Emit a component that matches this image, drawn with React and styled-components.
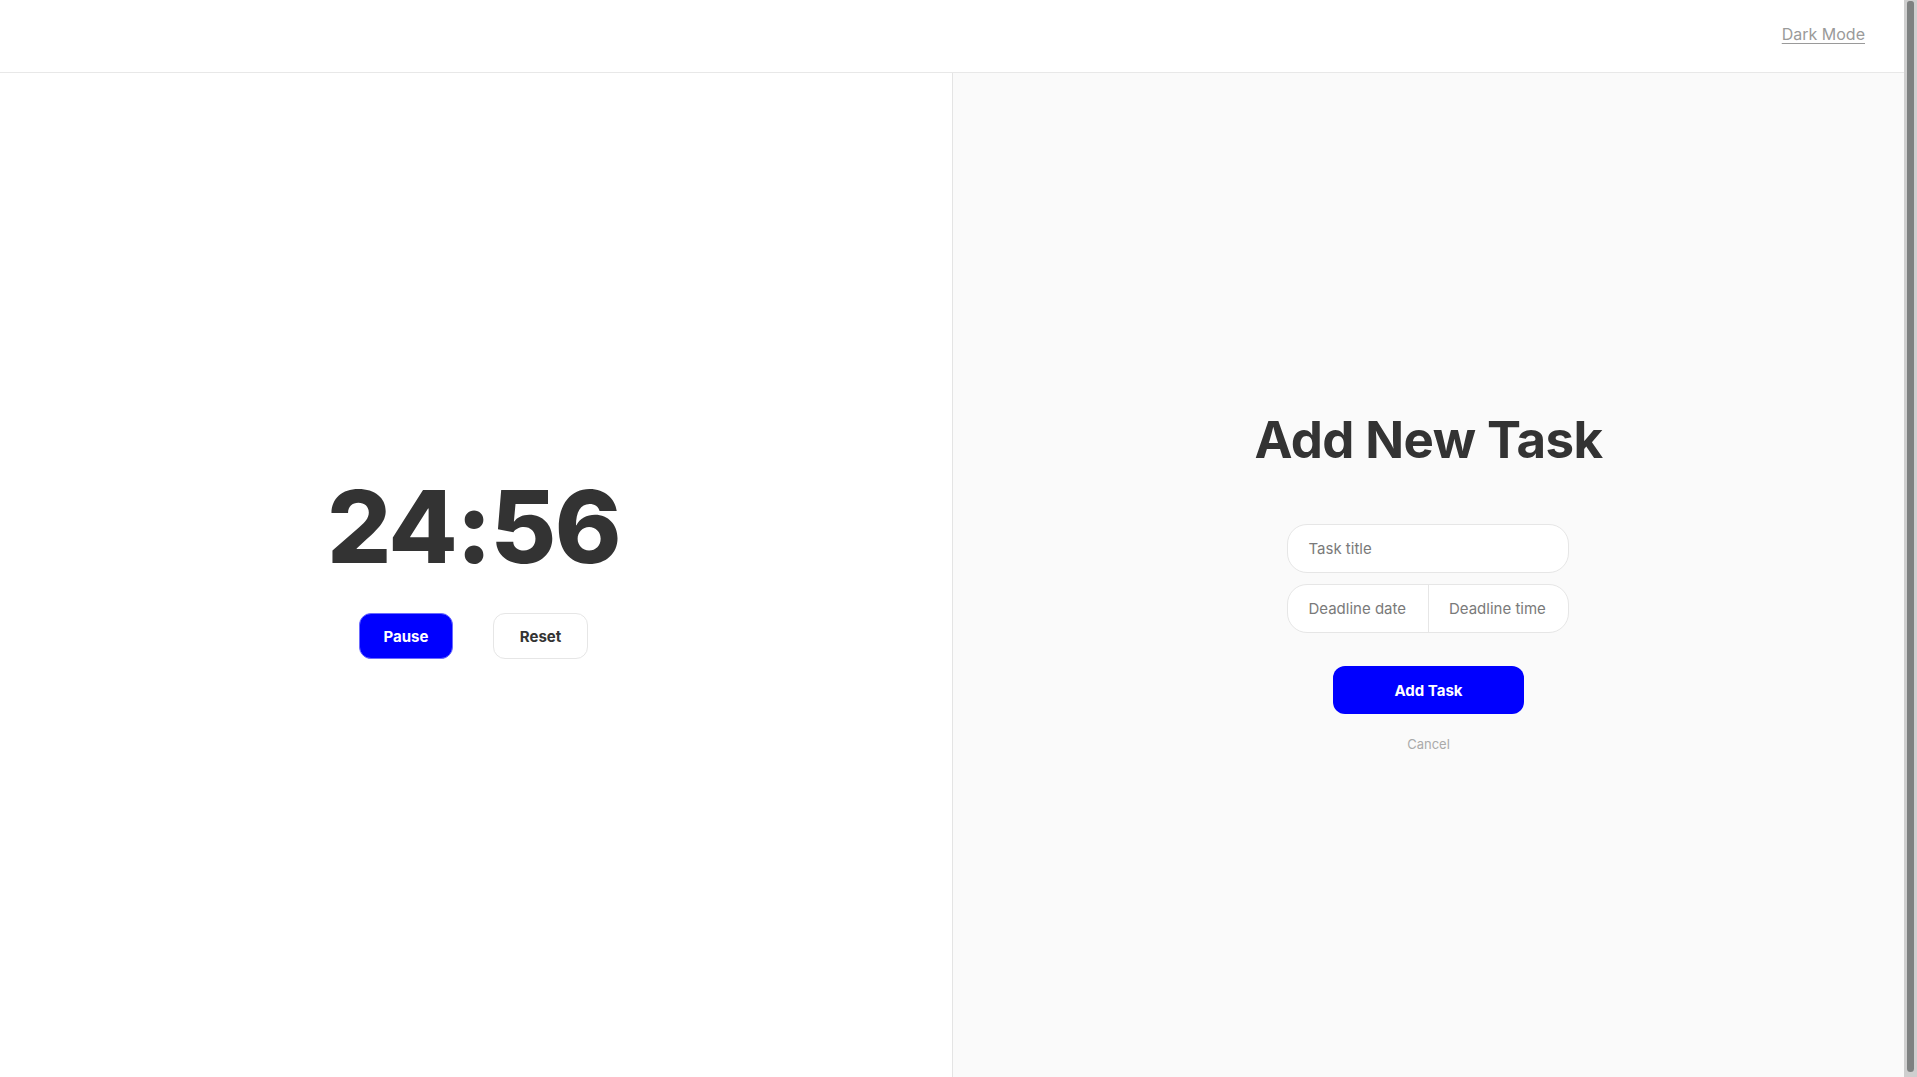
import styled, { createGlobalStyle } from "styled-components";

const GlobalStyle = createGlobalStyle`
  html, body {
    margin: 0;
    padding: 0;
    background: #ffffff;
    font-family: Inter, "Noto Sans", sans-serif;
    color: #333333;
  }
  * {
    box-sizing: border-box;
  }
`;

const Page = styled.div`
  display: flex;
  flex-direction: column;
  margin-right: 13px;
`;

const ScrollTrack = styled.div`
  position: fixed;
  top: 0;
  right: 0;
  bottom: 0;
  width: 13px;
  background: #cfcfcf;
  padding: 1px 3px 5px 3px;
`;

const ScrollThumb = styled.div`
  height: 100%;
  background: #7e8181;
  border-radius: 3px 3px 4px 4px;
`;

const Header = styled.header`
  height: 73px;
  display: flex;
  justify-content: flex-end;
  align-items: center;
  padding: 0 39px 0 0;
  border-bottom: 1px solid #e8e8e8;
  background: #ffffff;
`;

const ThemeLink = styled.a`
  font-size: 16px;
  color: #9a9a9a;
  text-decoration: underline;
  text-underline-offset: 3px;
  cursor: pointer;
  margin-top: -4px;
`;

const Main = styled.main`
  height: calc(100vh - 66px);
  display: grid;
  grid-template-columns: 1fr 1fr;
`;

const Panel = styled.section`
  display: flex;
  flex-direction: column;
  align-items: center;
  justify-content: center;
  background: ${(p) => (p.$muted ? "#fafafa" : "#ffffff")};
  border-left: ${(p) => (p.$muted ? "1px solid #e4e4e4" : "none")};
  padding-right: ${(p) => (p.$muted ? 0 : 5)}px;
`;

const Timer = styled.div`
  font-size: 101px;
  font-weight: 800;
  letter-spacing: -1.5px;
  line-height: 1.2;
  color: #333333;
  margin-top: -32px;
`;

const Controls = styled.div`
  display: flex;
  gap: 40px;
  margin-top: 26px;
`;

const Button = styled.button`
  font-family: inherit;
  font-size: 15px;
  font-weight: 700;
  height: ${(p) => p.$h || 46}px;
  width: ${(p) => p.$w || 94}px;
  border-radius: 12px;
  cursor: pointer;
  border: 1px solid ${(p) => (p.$primary ? "#6b6bff" : "#e6e6e6")};
  background: ${(p) => (p.$primary ? "#0000ff" : "#ffffff")};
  color: ${(p) => (p.$primary ? "#ffffff" : "#333333")};
`;

const SubmitButton = styled(Button)`
  margin-top: 22px;
  border: none;
`;

const Form = styled.div`
  display: flex;
  flex-direction: column;
  align-items: center;
  margin-top: 4px;
`;

const Title = styled.h1`
  margin: 0 0 54px;
  font-size: 51px;
  font-weight: 700;
  letter-spacing: -0.6px;
  color: #333333;
`;

const Field = styled.div`
  display: flex;
  width: 282px;
  height: 49px;
  border: 1px solid #e6e6e6;
  border-radius: 20px;
  background: #ffffff;
  overflow: hidden;
  margin-bottom: 11px;
`;

const Input = styled.input`
  flex: 1;
  min-width: 0;
  border: none;
  border-left: ${(p) => (p.$split ? "1px solid #e6e6e6" : "none")};
  background: transparent;
  font-family: inherit;
  font-size: 15px;
  color: #333333;
  padding: 0 20px;
  outline: none;
  &::placeholder {
    color: #7a7a7a;
  }
`;

const CancelLink = styled.a`
  margin-top: 22px;
  font-size: 13px;
  color: #aaaaaa;
  cursor: pointer;
`;

export default function App() {
  return (
    <>
      <GlobalStyle />
      <Page>
        <Header>
          <ThemeLink>Dark Mode</ThemeLink>
        </Header>
        <Main>
          <Panel>
            <Timer>24:56</Timer>
            <Controls>
              <Button $primary>Pause</Button>
              <Button $w={95}>Reset</Button>
            </Controls>
          </Panel>
          <Panel $muted>
            <Form>
              <Title>Add New Task</Title>
              <Field>
                <Input placeholder="Task title" />
              </Field>
              <Field>
                <Input placeholder="Deadline date" />
                <Input $split placeholder="Deadline time" />
              </Field>
              <SubmitButton $primary $w={191} $h={48}>
                Add Task
              </SubmitButton>
              <CancelLink>Cancel</CancelLink>
            </Form>
          </Panel>
        </Main>
      </Page>
      <ScrollTrack>
        <ScrollThumb />
      </ScrollTrack>
    </>
  );
}
